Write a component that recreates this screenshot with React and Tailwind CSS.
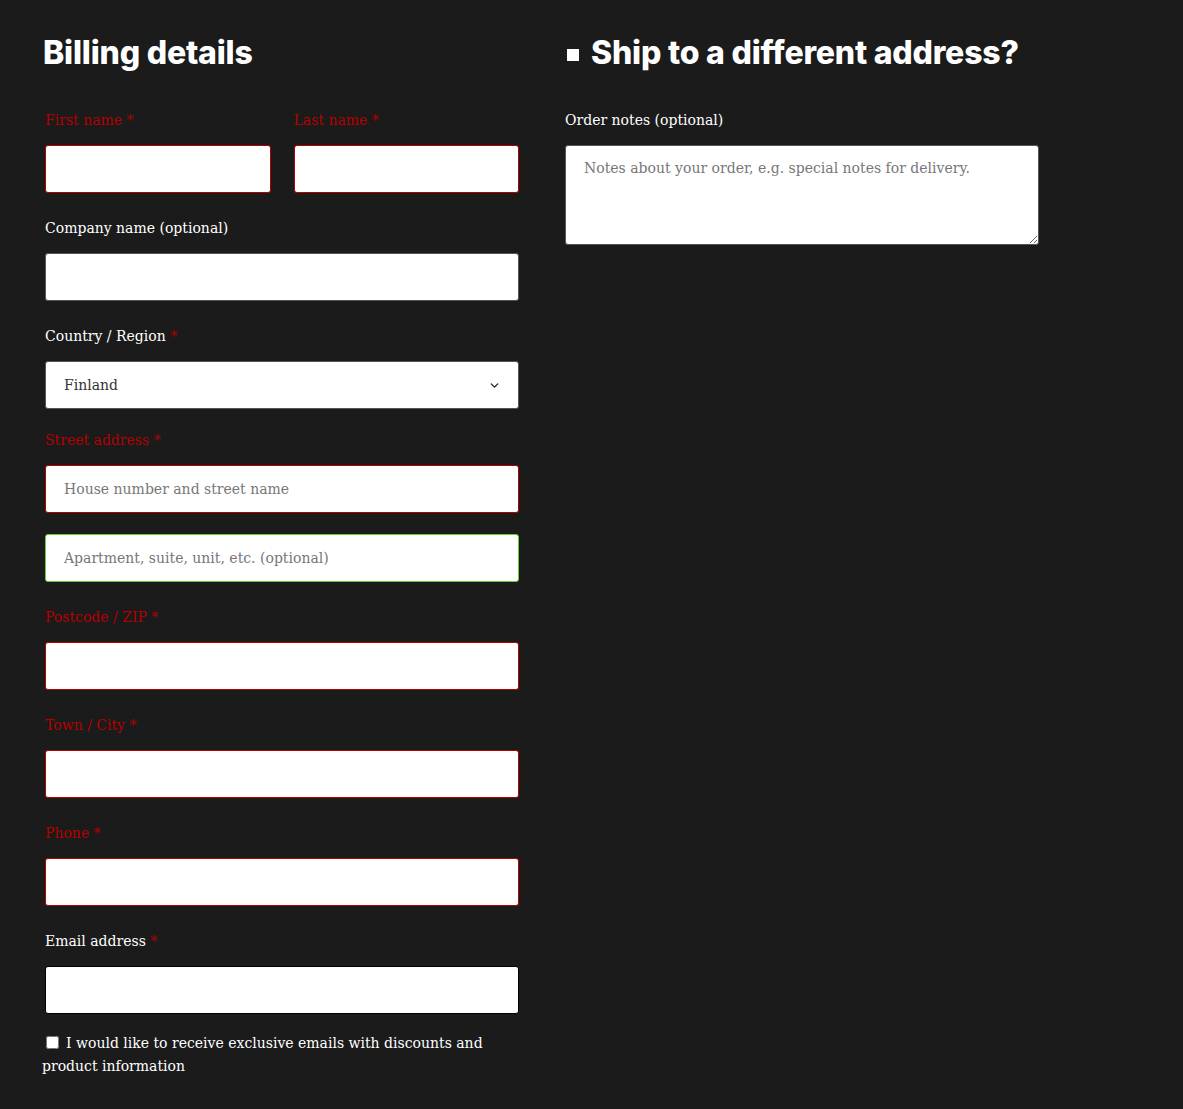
import { ChevronDown } from 'lucide-react'

const SERIF = { fontFamily: '"DejaVu Serif", "Liberation Serif", serif' }
const HEAD = { fontFamily: 'Inter, "Open Sans", sans-serif' }

const BASE_INPUT = 'block w-full h-12 bg-white rounded-[3px] border px-[18px] text-[14px] text-[#333] placeholder:text-[#777] focus:outline-none'

function Label({ children, invalid, required }) {
  return (
    <label className={`block leading-[26px] text-[14px] mb-[12px] ${invalid ? 'text-[#b30000]' : 'text-white'}`}>
      {children}
      {required && <span className="text-[#b30000]"> *</span>}
    </label>
  )
}

function Field({ label, invalid, required, border = 'border-[#b30000]', placeholder, className = '' }) {
  return (
    <div className={`mb-[22px] ${className}`}>
      <Label invalid={invalid} required={required}>{label}</Label>
      <input className={`${BASE_INPUT} ${border}`} placeholder={placeholder} />
    </div>
  )
}

export default function App() {
  return (
    <div className="min-h-screen bg-[#1b1b1b] pl-[45px] pt-[33px] pb-[30px]" style={SERIF}>
      <div className="flex gap-[46px]">
        {/* billing */}
        <div className="w-[474px]">
          <h3 className="text-[32px] font-extrabold text-white leading-10 -ml-[2px] mb-[34px] tracking-[-0.2px]" style={HEAD}>
            Billing details
          </h3>

          <div className="flex gap-[23px]">
            <Field label="First name" invalid required className="flex-1" />
            <Field label="Last name" invalid required className="flex-1" />
          </div>

          <Field label="Company name (optional)" border="border-[#555]" />

          <div className="mb-[18px]">
            <Label required>Country / Region</Label>
            <div className="relative">
              <select className={`${BASE_INPUT} border-[#555] appearance-none`} defaultValue="FI">
                <option value="FI">Finland</option>
              </select>
              <ChevronDown size={13} strokeWidth={2.5} className="absolute right-[18px] top-[18px] text-[#222] pointer-events-none" />
            </div>
          </div>

          <div className="mb-[22px]">
            <Label invalid required>Street address</Label>
            <input className={`${BASE_INPUT} border-[#b30000]`} placeholder="House number and street name" />
            <input className={`${BASE_INPUT} border-[#66cc33] mt-[21px]`} placeholder="Apartment, suite, unit, etc. (optional)" />
          </div>

          <Field label="Postcode / ZIP" invalid required />
          <Field label="Town / City" invalid required />
          <Field label="Phone" invalid required />
          <Field label="Email address" required border="border-black" className="!mb-[18px]" />

          <p className="text-[14px] leading-[23px] text-white -ml-[3px]">
            <input type="checkbox" className="w-[13px] h-[13px] align-[-1px] ml-[4px] mr-[7px]" />
            I would like to receive exclusive emails with discounts and product information
          </p>
        </div>

        {/* shipping */}
        <div className="w-[474px]">
          <h3 className="flex items-center text-[32px] font-extrabold text-white leading-10 mb-[34px] tracking-[-0.2px]" style={HEAD}>
            <span className="w-[12px] h-[12px] bg-white ml-[2px] mr-[12px] mt-[4px]" />
            Ship to a different address?
          </h3>
          <Label>Order notes (optional)</Label>
          <textarea
            className="block w-full h-[100px] bg-white rounded-[3px] border border-[#555] px-[18px] py-[12px] text-[14px] text-[#333] placeholder:text-[#777] focus:outline-none"
            placeholder="Notes about your order, e.g. special notes for delivery."
          />
        </div>
      </div>
    </div>
  )
}
